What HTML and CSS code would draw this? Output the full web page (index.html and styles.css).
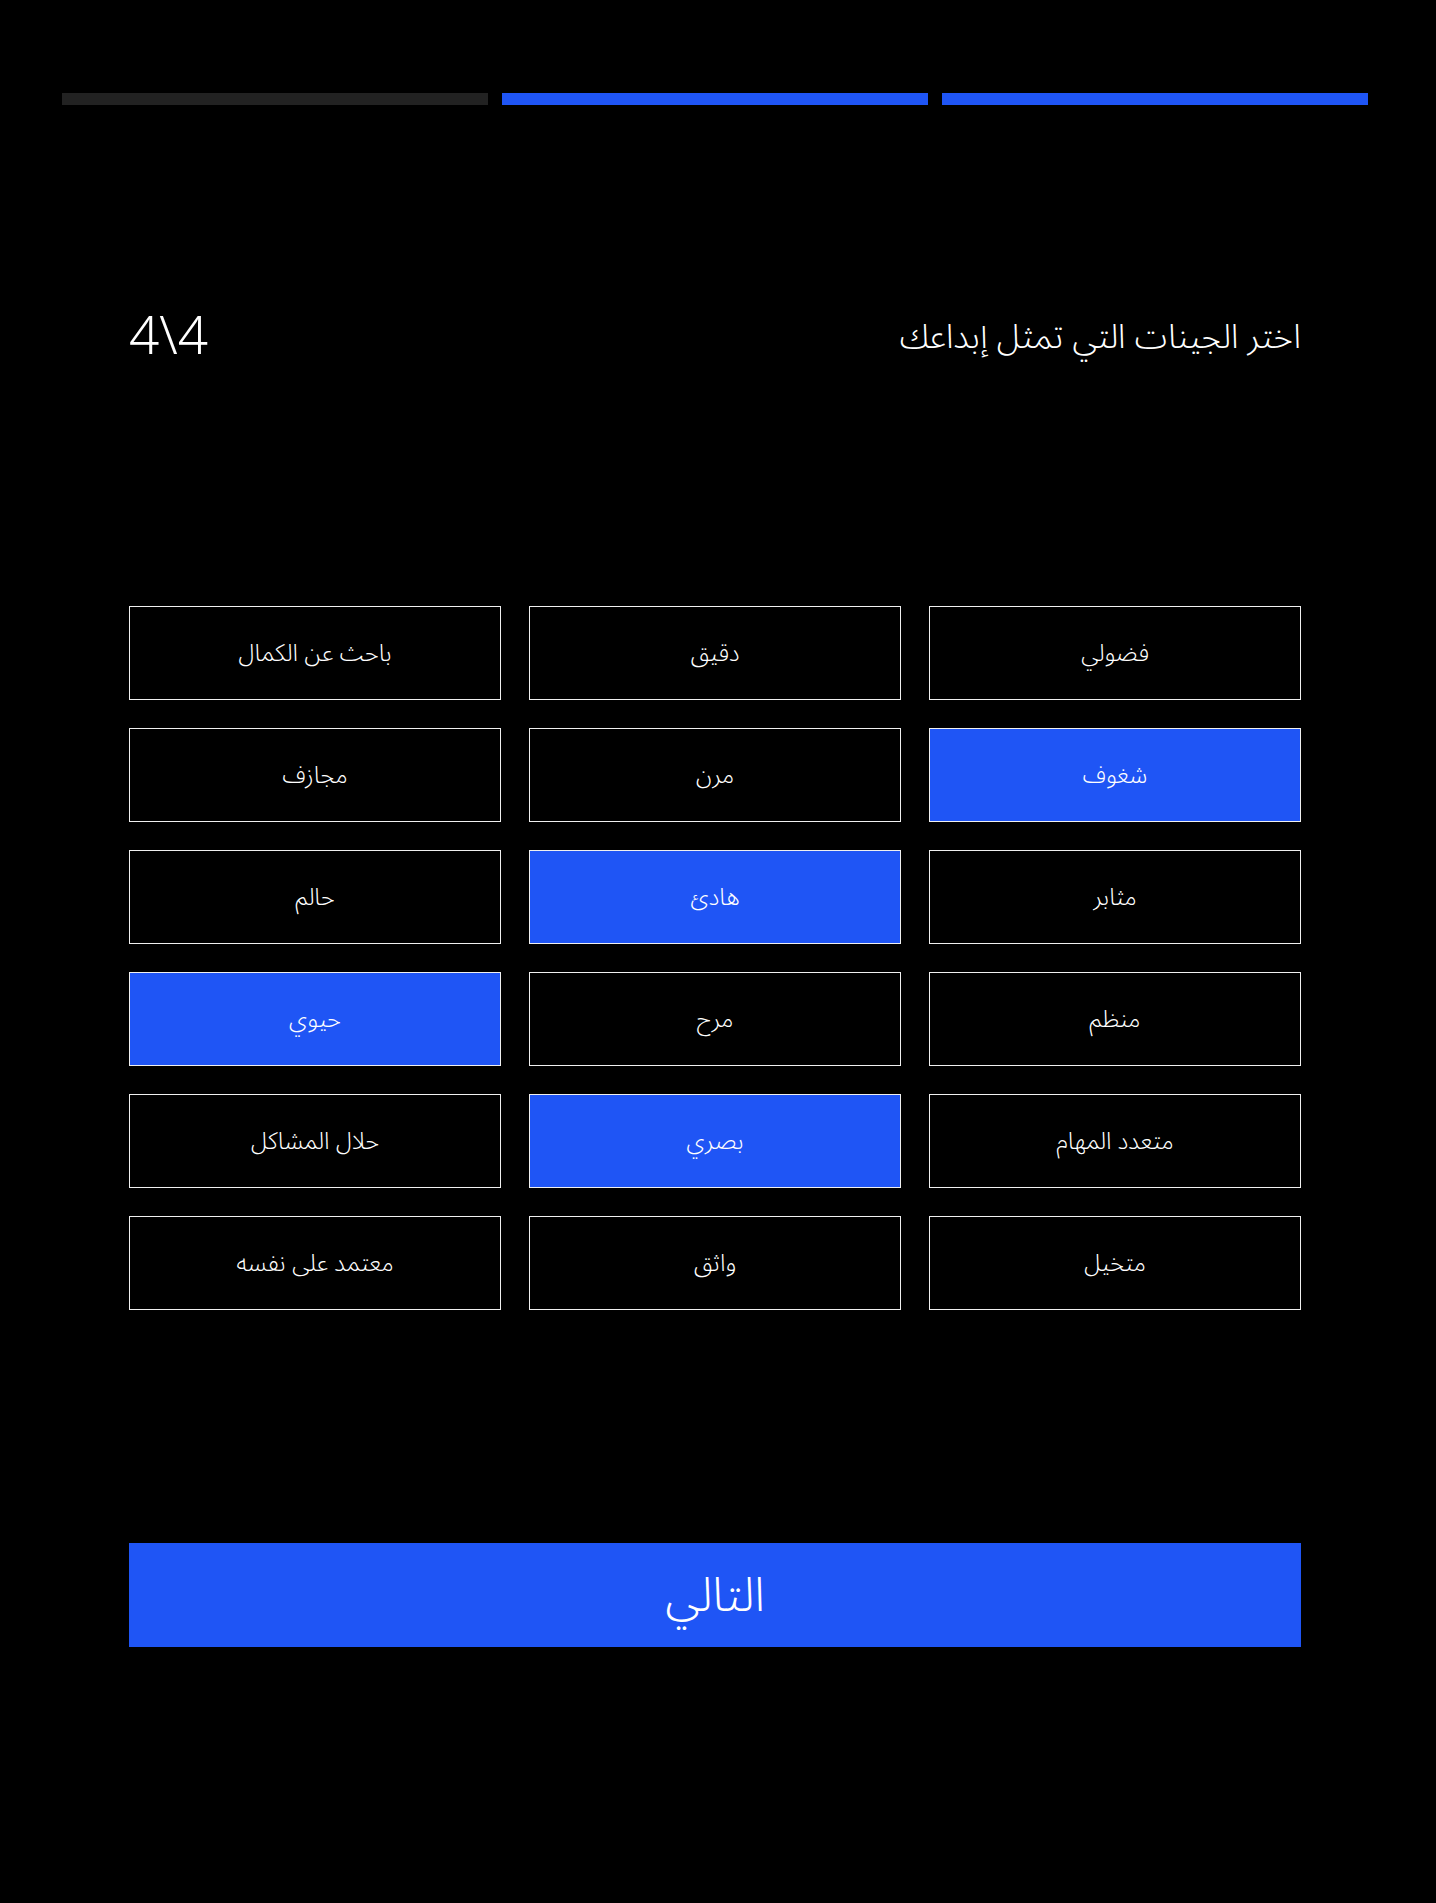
FILE: index.html
```html
<!DOCTYPE html>
<html lang="ar">
<head>
<meta charset="utf-8">
<title>اختر الجينات</title>
<link rel="stylesheet" href="styles.css">
</head>
<body>
<div class="page">
  <div class="progress">
    <span class="seg seg-off"></span>
    <span class="seg seg-on"></span>
    <span class="seg seg-on"></span>
  </div>
  <main class="content" dir="rtl">
    <header class="head">
      <h1 class="title">اختر الجينات التي تمثل إبداعك</h1>
      <span class="step" dir="ltr">4\4</span>
    </header>
    <div class="grid">
      <button class="opt">فضولي</button>
      <button class="opt">دقيق</button>
      <button class="opt">باحث عن الكمال</button>
      <button class="opt on">شغوف</button>
      <button class="opt">مرن</button>
      <button class="opt">مجازف</button>
      <button class="opt">مثابر</button>
      <button class="opt on">هادئ</button>
      <button class="opt">حالم</button>
      <button class="opt">منظم</button>
      <button class="opt">مرح</button>
      <button class="opt on">حيوي</button>
      <button class="opt">متعدد المهام</button>
      <button class="opt on">بصري</button>
      <button class="opt">حلال المشاكل</button>
      <button class="opt">متخيل</button>
      <button class="opt">واثق</button>
      <button class="opt">معتمد على نفسه</button>
    </div>
    <button class="next">التالي</button>
  </main>
</div>
</body>
</html>
```
FILE: styles.css
```css
html, body {
  margin: 0;
  padding: 0;
  background: #000;
}
body {
  min-height: 1903px;
  color: #fff;
  font-family: "Noto Sans Arabic", "DejaVu Sans Condensed", "DejaVu Sans", sans-serif;
}
.page {
  padding-top: 93px;
}
.progress {
  display: flex;
  gap: 14px;
  width: 1306px;
  margin-left: 62px;
  height: 12px;
}
.seg {
  flex: 1;
  display: block;
}
.seg-off { background: #222222; }
.seg-on { background: #1f55f5; }

.content {
  width: 1172px;
  margin-left: 129px;
}
.head {
  margin-top: 211px;
  height: 42px;
  display: flex;
  justify-content: space-between;
  align-items: center;
}
.title {
  margin: 0;
  font-size: 34px;
  font-weight: 300;
  line-height: 42px;
}
.step {
  font-size: 53px;
  font-weight: 300;
  line-height: 42px;
}
.grid {
  margin-top: 248px;
  display: grid;
  grid-template-columns: repeat(3, 1fr);
  grid-auto-rows: 94px;
  gap: 28px;
}
.opt {
  background: #000;
  color: #fff;
  border: 1.5px solid #f0f0f0;
  font-family: inherit;
  font-size: 24px;
  font-weight: 300;
  padding: 0;
  cursor: pointer;
}
.opt.on {
  background: #1f55f5;
}
.next {
  display: block;
  width: 100%;
  height: 104px;
  margin-top: 233px;
  border: none;
  background: #1f55f5;
  color: #fff;
  font-family: inherit;
  font-size: 48px;
  font-weight: 300;
  cursor: pointer;
}
```
